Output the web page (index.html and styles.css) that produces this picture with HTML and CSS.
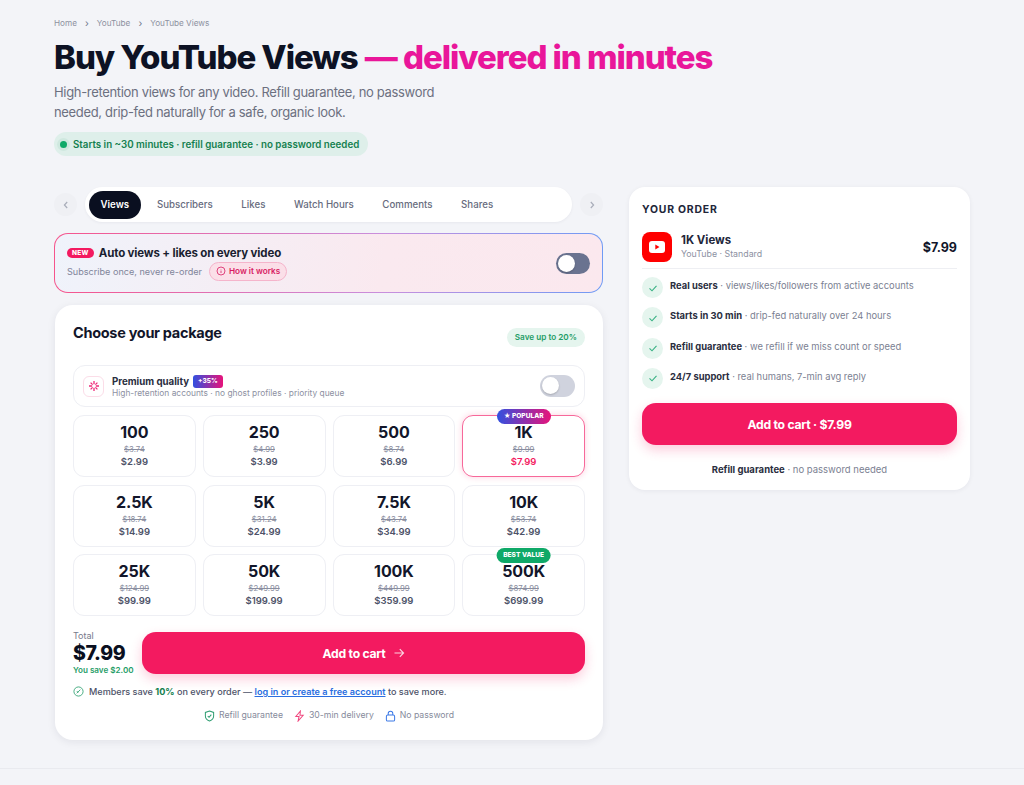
FILE: index.html
```html
<!DOCTYPE html>
<html>
  <head>
    <meta charset="utf-8" />
    <title>Buy YouTube Views</title>
    <link rel="stylesheet" href="styles.css">
  </head>
  <body>
    <div class="page">
      <div class="crumbs">
        <span>Home</span><i>›</i><span>YouTube</span><i>›</i><span>YouTube Views</span>
      </div>
      <h1>Buy YouTube Views <em>— delivered in minutes</em></h1>
      <p class="lead">High-retention views for any video. Refill guarantee, no password needed, drip-fed naturally for a safe, organic look.</p>
      <div class="status"><b class="dot"></b>Starts in ~30 minutes · refill guarantee · no password needed</div>

      <div class="columns">
        <div class="left">
          <div class="tabrow">
            <div class="arrow"><svg width="10" height="10" viewBox="0 0 10 10"><path d="M6.2 2 3.4 5l2.8 3" /></svg></div>
            <div class="tabs">
              <span class="tab active">Views</span>
              <span class="tab">Subscribers</span>
              <span class="tab">Likes</span>
              <span class="tab">Watch Hours</span>
              <span class="tab">Comments</span>
              <span class="tab">Shares</span>
            </div>
            <div class="arrow"><svg width="10" height="10" viewBox="0 0 10 10"><path d="M3.8 2 6.6 5 3.8 8" /></svg></div>
          </div>

          <div class="auto">
            <div class="auto-text">
              <div class="auto-title"><span class="new">NEW</span>Auto views + likes on every video</div>
              <div class="auto-sub">Subscribe once, never re-order
                <span class="how">
                  <svg width="10" height="10" viewBox="0 0 10 10"><circle cx="5" cy="5" r="4" /><path d="M5 4.6v2.4M5 3v.4" /></svg>
                  How it works
                </span>
              </div>
            </div>
            <div class="switch dark"><b></b></div>
          </div>

          <div class="card">
            <div class="card-head">
              <h2>Choose your package</h2>
              <span class="save">Save up to 20%</span>
            </div>

            <div class="premium">
              <div class="spark">
                <svg width="12" height="12" viewBox="0 0 12 12"><path d="M6 1v3.2M6 7.8V11M1 6h3.2M7.8 6H11M2.6 2.6l2 2M7.4 7.4l2 2M9.4 2.6l-2 2M4.6 7.4l-2 2" /></svg>
              </div>
              <div class="premium-text">
                <div class="premium-title">Premium quality <span class="plus">+35%</span></div>
                <div class="premium-sub">High-retention accounts · no ghost profiles · priority queue</div>
              </div>
              <div class="switch"><b></b></div>
            </div>

            <div class="grid">
              <div class="pack"><strong>100</strong><s>$3.74</s><span>$2.99</span></div>
              <div class="pack"><strong>250</strong><s>$4.99</s><span>$3.99</span></div>
              <div class="pack"><strong>500</strong><s>$8.74</s><span>$6.99</span></div>
              <div class="pack selected"><b class="flag popular">★ POPULAR</b><strong>1K</strong><s>$9.99</s><span>$7.99</span></div>
              <div class="pack"><strong>2.5K</strong><s>$18.74</s><span>$14.99</span></div>
              <div class="pack"><strong>5K</strong><s>$31.24</s><span>$24.99</span></div>
              <div class="pack"><strong>7.5K</strong><s>$43.74</s><span>$34.99</span></div>
              <div class="pack"><strong>10K</strong><s>$53.74</s><span>$42.99</span></div>
              <div class="pack"><strong>25K</strong><s>$124.99</s><span>$99.99</span></div>
              <div class="pack"><strong>50K</strong><s>$249.99</s><span>$199.99</span></div>
              <div class="pack"><strong>100K</strong><s>$449.99</s><span>$359.99</span></div>
              <div class="pack"><b class="flag best">BEST VALUE</b><strong>500K</strong><s>$874.99</s><span>$699.99</span></div>
            </div>

            <div class="buy">
              <div class="total">
                <div class="total-label">Total</div>
                <div class="total-num">$7.99</div>
                <div class="total-save">You save $2.00</div>
              </div>
              <div class="cart">Add to cart
                <svg width="12" height="12" viewBox="0 0 12 12"><path d="M1.5 6h9M6.8 2.2 10.5 6 6.8 9.8" /></svg>
              </div>
            </div>

            <div class="members">
              <svg width="11" height="11" viewBox="0 0 12 12"><circle cx="6" cy="6" r="5" /><path d="M4 8l4-4M4.2 5.6 5.6 7" /></svg>
              <span>Members save <b>10%</b> on every order — <a href="#">log in or create a free account</a> to save more.</span>
            </div>

            <div class="trust">
              <span><svg class="t-green" width="11" height="12" viewBox="0 0 12 13"><path d="M6 1 10.500 2.600V6.500C10.500 9.200 8.500 11 6 12 3.500 11 1.500 9.200 1.500 6.500V2.600ZM4 6.500 5.500 8 8 5" /></svg>Refill guarantee</span>
              <span><svg class="t-pink" width="11" height="12" viewBox="0 0 12 13"><path d="M7 1 2 7h3.500L4.500 12 10 5.800H6.500Z" /></svg>30-min delivery</span>
              <span><svg class="t-blue" width="11" height="12" viewBox="0 0 12 13"><rect x="1.500" y="5.500" width="9" height="6.500" rx="1.500" /><path d="M3.500 5.500V3.800a2.500 2.500 0 0 1 5 0v1.700" /></svg>No password</span>
            </div>
          </div>
        </div>

        <div class="order">
          <div class="order-head">YOUR ORDER</div>
          <div class="order-item">
            <div class="yt">
              <svg width="16" height="12" viewBox="0 0 16 12"><rect width="16" height="12" rx="3" fill="#fff" /><path d="M6.300 3.500 10.500 6 6.300 8.500Z" fill="#f00" /></svg>
            </div>
            <div class="order-name">
              <div class="order-title">1K Views</div>
              <div class="order-sub">YouTube · Standard</div>
            </div>
            <div class="order-price">$7.99</div>
          </div>
          <ul class="feats">
            <li><i class="tick"><svg width="10" height="10" viewBox="0 0 10 10"><path d="M1.500 5.300 4 7.800 8.500 2.800" /></svg></i><span><b>Real users</b> · views/likes/followers from active accounts</span></li>
            <li><i class="tick"><svg width="10" height="10" viewBox="0 0 10 10"><path d="M1.500 5.300 4 7.800 8.500 2.800" /></svg></i><span><b>Starts in 30 min</b> · drip-fed naturally over 24 hours</span></li>
            <li><i class="tick"><svg width="10" height="10" viewBox="0 0 10 10"><path d="M1.500 5.300 4 7.800 8.500 2.800" /></svg></i><span><b>Refill guarantee</b> · we refill if we miss count or speed</span></li>
            <li><i class="tick"><svg width="10" height="10" viewBox="0 0 10 10"><path d="M1.500 5.300 4 7.800 8.500 2.800" /></svg></i><span><b>24/7 support</b> · real humans, 7-min avg reply</span></li>
          </ul>
          <div class="cart order-cart">Add to cart · $7.99</div>
          <div class="order-foot"><b>Refill guarantee</b> · no password needed</div>
        </div>
      </div>
    </div>
    <div class="footline"></div>
  </body>
</html>
```

FILE: styles.css
```css
* {
  box-sizing: border-box;
}
html, body {
  margin: 0;
  height: 785px;
  overflow: hidden;
}
body {
  background: #f3f4f8;
  font-family: "Inter", "Liberation Sans", sans-serif;
  color: #0d1224;
}
.page {
  width: 916px;
  height: 768px;
  margin-left: 54px;
  padding-top: 16px;
}
.footline {
  height: 1px;
  background: #e9eaef;
}

/* hero */
.crumbs {
  display: flex;
  align-items: center;
  gap: 8px;
  height: 13px;
  font-size: 8.200px;
  color: #8d91a0;
}
.crumbs i {
  font-style: normal;
  color: #70748a;
  font-size: 10px;
  line-height: 10px;
}
h1 {
  margin: 8px 0 0;
  font-size: 33px;
  line-height: 40px;
  font-weight: 800;
  letter-spacing: -1.05px;
  color: #0d1224;
  white-space: nowrap;
}
h1 em {
  margin-left: 1px;
  font-style: normal;
  color: #e9169a;
}
.lead {
  margin: 5px 0 0;
  width: 400px;
  font-size: 13px;
  line-height: 20px;
  letter-spacing: -0.33px;
  color: #6c7080;
}
.status {
  display: inline-flex;
  align-items: center;
  height: 24px;
  margin-top: 10px;
  padding: 0 9px 0 6px;
  border-radius: 12px;
  background: #deefea;
  color: #14804f;
  font-size: 9.740px;
  font-weight: 600;
}
.dot {
  width: 7px;
  height: 7px;
  margin-right: 6px;
  border-radius: 50%;
  background: #0fa968;
  box-shadow: 0 0 0 3px #cfe8df;
}

/* two columns */
.columns {
  display: flex;
  align-items: flex-start;
  gap: 26px;
  margin-top: 31px;
}
.left {
  width: 549px;
  flex: none;
}

/* tabs */
.tabrow {
  display: flex;
  align-items: center;
  gap: 8px;
  height: 35px;
}
.arrow {
  display: flex;
  align-items: center;
  justify-content: center;
  flex: none;
  width: 23px;
  height: 23px;
  border-radius: 50%;
  background: #eff0f4;
}
.arrow svg {
  fill: none;
  stroke: #a9adb9;
  stroke-width: 1.200;
}
.tabs {
  display: flex;
  align-items: center;
  gap: 0;
  flex: 1;
  height: 35px;
  padding: 0 4px;
  border-radius: 18px;
  background: #fff;
  box-shadow: 0 1px 3px rgba(20, 25, 50, 0.05);
}
.tab {
  padding: 0 14.300px;
  font-size: 9.700px;
  font-weight: 500;
  color: #676c7e;
  line-height: 28px;
  white-space: nowrap;
}
.tab.active {
  margin-right: 2px;
  padding: 0 11.500px;
  border-radius: 14px;
  background: #0a0f20;
  color: #fff;
  font-weight: 600;
}

/* auto box */
.auto {
  display: flex;
  align-items: center;
  justify-content: space-between;
  height: 60px;
  margin-top: 11px;
  padding: 0 12px;
  border: 1.500px solid transparent;
  border-radius: 14px;
  background:
    linear-gradient(100deg, #eff3fb, #fae9ef 60%, #fbe8ee) padding-box,
    linear-gradient(90deg, #f6548c, #c98fdd 60%, #6f9bf5) border-box;
}
.auto-title {
  display: flex;
  align-items: center;
  font-size: 11.500px;
  font-weight: 700;
  letter-spacing: -0.15px;
  color: #1a1e30;
}
.new {
  margin-right: 5px;
  padding: 0 5px;
  border-radius: 6px;
  background: #f31a60;
  color: #fff;
  font-size: 6.500px;
  font-weight: 800;
  line-height: 10px;
  letter-spacing: 0.3px;
}
.auto-sub {
  display: flex;
  align-items: center;
  gap: 7px;
  margin-top: 2px;
  font-size: 9.100px;
  color: #81859a;
}
.how {
  display: inline-flex;
  align-items: center;
  gap: 3px;
  height: 19px;
  padding: 0 6px;
  border: 1px solid #f5b4cb;
  border-radius: 10px;
  background: #fbdfe8;
  color: #d81c62;
  font-size: 8.200px;
  font-weight: 600;
}
.how svg {
  fill: none;
  stroke: #d81c62;
  stroke-width: 0.800;
}
.switch {
  position: relative;
  flex: none;
  width: 35px;
  height: 22px;
  border-radius: 11px;
  background: #d0d3de;
}
.switch.dark {
  width: 34px;
  height: 21px;
  background: #6a7390;
}
.switch b {
  position: absolute;
  left: 2px;
  top: 2px;
  width: 17px;
  height: 17px;
  border-radius: 50%;
  background: #fff;
  box-shadow: 0 1px 2px rgba(0, 0, 0, 0.2);
}

/* package card */
.card {
  height: 435px;
  margin-top: 12px;
  margin-left: 1px;
  padding: 18px 18px 0;
  border-radius: 18px;
  background: #fff;
  box-shadow: 0 2px 8px rgba(20, 25, 50, 0.08);
}
.card-head {
  display: flex;
  justify-content: space-between;
  align-items: flex-start;
  height: 42px;
}
h2 {
  margin: 0;
  font-size: 14.500px;
  line-height: 20px;
  font-weight: 700;
  letter-spacing: -0.3px;
  color: #12162a;
}
.save {
  margin-top: 5px;
  padding: 0 8px;
  border-radius: 10px;
  background: #e5f5ee;
  color: #1f9d67;
  font-size: 8.200px;
  font-weight: 600;
  line-height: 19px;
}
.premium {
  display: flex;
  align-items: center;
  height: 42px;
  padding: 0 9px;
  border: 1px solid #eeeff4;
  border-radius: 12px;
}
.spark {
  display: flex;
  align-items: center;
  justify-content: center;
  flex: none;
  width: 21px;
  height: 21px;
  margin-right: 8px;
  border: 1px solid #fbdde8;
  border-radius: 6px;
}
.spark svg {
  fill: none;
  stroke: #ee2a78;
  stroke-width: 1.300;
}
.premium-text {
  flex: 1;
}
.premium-title {
  display: flex;
  align-items: center;
  gap: 4px;
  font-size: 9.700px;
  font-weight: 700;
  color: #2a2e40;
}
.plus {
  padding: 0 5px;
  border-radius: 3px;
  background: linear-gradient(90deg, #3150e0, #e7137a);
  color: #fff;
  font-size: 6.500px;
  font-weight: 800;
  line-height: 13px;
}
.premium-sub {
  font-size: 8.400px;
  color: #8d91a2;
}
.grid {
  display: grid;
  grid-template-columns: repeat(4, 1fr);
  grid-auto-rows: 62px;
  gap: 7.500px 7px;
  margin-top: 8px;
}
.pack {
  position: relative;
  display: flex;
  flex-direction: column;
  align-items: center;
  padding-top: 6px;
  border: 1px solid #eeeff4;
  border-radius: 11px;
}
.pack strong {
  font-size: 16px;
  line-height: 20px;
  font-weight: 700;
  color: #12162a;
  letter-spacing: -0.1px;
}
.pack s {
  font-size: 7.800px;
  line-height: 12px;
  margin-top: 1px;
  color: #8a8ea0;
}
.pack span {
  font-size: 9.500px;
  line-height: 14px;
  font-weight: 600;
  color: #4d5268;
}
.pack.selected {
  border: 1.500px solid #f7689a;
  box-shadow: 0 0 6px rgba(243, 26, 96, 0.2);
}
.pack.selected span {
  color: #f31a60;
}
.flag {
  position: absolute;
  top: -7px;
  left: 50%;
  transform: translateX(-50%);
  padding: 0 7px;
  border-radius: 8px;
  color: #fff;
  font-size: 6.600px;
  font-weight: 800;
  line-height: 15px;
  white-space: nowrap;
}
.popular {
  background: linear-gradient(90deg, #3150e0, #e7137a);
}
.best {
  background: #0fa968;
}
.buy {
  display: flex;
  align-items: flex-start;
  margin-top: 16px;
}
.total {
  flex: none;
  width: 69px;
  margin-top: -1px;
}
.total-label {
  font-size: 9px;
  line-height: 10px;
  color: #767a8c;
}
.total-num {
  font-size: 19.500px;
  line-height: 25px;
  font-weight: 800;
  letter-spacing: -0.4px;
  color: #0a0f20;
}
.total-save {
  font-size: 8.100px;
  line-height: 9px;
  font-weight: 600;
  color: #1f9d67;
}
.cart {
  display: flex;
  align-items: center;
  justify-content: center;
  gap: 7px;
  flex: 1;
  height: 42px;
  border-radius: 14px;
  background: #f31a60;
  color: #fff;
  font-size: 12.200px;
  font-weight: 700;
  letter-spacing: -0.25px;
  box-shadow: 0 5px 12px rgba(243, 26, 96, 0.22);
}
.cart svg {
  fill: none;
  stroke: #fbd3e0;
  stroke-width: 1.200;
}
.members {
  display: flex;
  align-items: center;
  gap: 5px;
  margin-top: 10px;
  font-size: 9.100px;
  line-height: 13px;
  font-weight: 500;
  color: #4d5268;
  white-space: nowrap;
}
.members svg {
  fill: none;
  stroke: #3aa679;
  stroke-width: 1;
}
.members b {
  color: #14804f;
  font-weight: 700;
}
.members a {
  color: #2a6ee0;
  font-weight: 600;
}
.trust {
  display: flex;
  justify-content: center;
  gap: 11px;
  margin-top: 11px;
  font-size: 8.700px;
  line-height: 13px;
  color: #868a9b;
}
.trust span {
  display: flex;
  align-items: center;
  gap: 4px;
}
.trust svg {
  fill: none;
  stroke-width: 1.100;
}
.t-green {
  stroke: #2f9e72;
}
.t-pink {
  stroke: #f0487f;
}
.t-blue {
  stroke: #3a78e6;
}

/* order panel */
.order {
  width: 341px;
  flex: none;
  height: 303px;
  padding: 15px 13px 0;
  border-radius: 16px;
  background: #fff;
  box-shadow: 0 1px 5px rgba(20, 25, 50, 0.06);
}
.order-head {
  font-size: 10.400px;
  line-height: 16px;
  font-weight: 700;
  letter-spacing: 0.8px;
  color: #22263a;
}
.order-item {
  display: flex;
  align-items: center;
  height: 30px;
  margin-top: 14px;
  padding-bottom: 6px;
  border-bottom: 1px solid #eeeff3;
  box-sizing: content-box;
}
.yt {
  display: flex;
  align-items: center;
  justify-content: center;
  flex: none;
  width: 30px;
  height: 30px;
  margin-right: 9px;
  border-radius: 8px;
  background: #ff0000;
}
.order-name {
  flex: 1;
}
.order-title {
  font-size: 11.400px;
  line-height: 14px;
  font-weight: 700;
  color: #22263a;
}
.order-sub {
  font-size: 8.800px;
  line-height: 14px;
  color: #8d91a2;
}
.order-price {
  font-size: 12.500px;
  font-weight: 700;
  color: #12162a;
}
.feats {
  margin: 0;
  padding: 0;
  list-style: none;
}
.feats li {
  display: flex;
  align-items: flex-start;
  height: 30.300px;
  font-size: 9.400px;
  line-height: 13px;
  color: #7b7f92;
  white-space: nowrap;
}
.feats li:first-child {
  margin-top: 8px;
}
.feats span {
  margin-top: 2px;
}
.feats b {
  color: #2a2e40;
  font-weight: 700;
}
.tick {
  display: flex;
  align-items: center;
  justify-content: center;
  flex: none;
  width: 21px;
  height: 21px;
  margin-right: 7px;
  border-radius: 50%;
  background: #e5f5ee;
}
.tick svg {
  fill: none;
  stroke: #38b183;
  stroke-width: 1.100;
}
.order-cart {
  margin-top: 5px;
}
.order-foot {
  margin-top: 18px;
  text-align: center;
  font-size: 9.500px;
  line-height: 13px;
  color: #7b7f92;
}
.order-foot b {
  color: #2a2e40;
  font-weight: 700;
}
```
